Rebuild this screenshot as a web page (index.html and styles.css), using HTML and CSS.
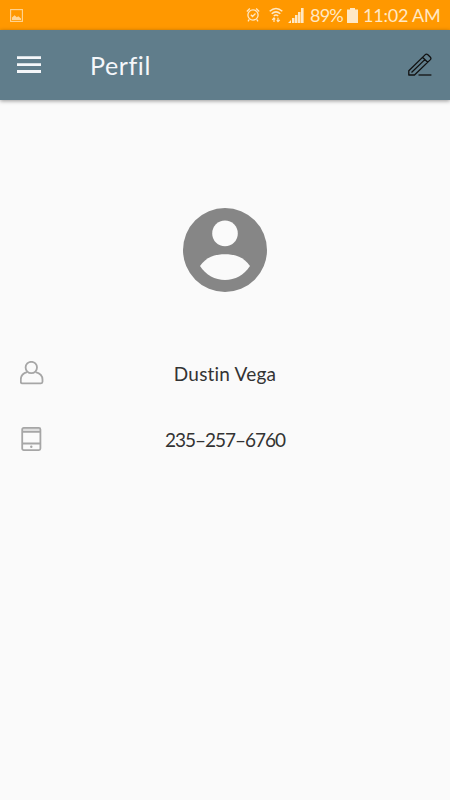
FILE: index.html
```html
<!DOCTYPE html>
<html lang="es">
<head>
    <meta charset="UTF-8">
    <meta name="viewport" content="width=device-width, initial-scale=1">
    <title>Perfil</title>
    <link rel="stylesheet" href="styles.css">
</head>
<body>
    <div class="status-bar">
        <svg class="icon-picture" width="13" height="13" viewBox="0 0 13 13">
            <rect x=".6" y=".6" width="11.8" height="11.8" fill="none" stroke="currentColor" stroke-width="1.1"/>
            <path d="M2 11V8.4L4.6 6.2 6.8 8.2 8.3 7.2 11 9.4V11z" fill="currentColor"/>
        </svg>
        <div class="status-right">
            <svg class="icon-alarm" width="14" height="16" viewBox="0 0 14 16" fill="none" stroke="currentColor" stroke-width="1.3">
                <circle cx="7" cy="8" r="5.1"/>
                <path d="M.8 4.4 3.8 1.6M13.2 4.4 10.2 1.6M3.3 12.4 2 14.3M10.7 12.4 12 14.3M4.8 7.8 6.5 9.5 9.5 6.5"/>
            </svg>
            <svg class="icon-wifi" width="14" height="16" viewBox="0 0 14 16" fill="none" stroke="currentColor" stroke-width="1.5">
                <path d="M.7 4.3Q7-1.3 13.3 4.3M2.7 6.7Q7 3 11.3 6.7M4.8 9Q7 7.2 9.2 9"/>
                <path d="M5 15V11M3.2 12.9 5 11 6.2 12.3M9 10.7V14.6M7.8 13.2 9 14.7 10.8 12.8" stroke-width="1.2"/>
            </svg>
            <svg class="icon-signal" width="16" height="15" viewBox="0 0 16 15" fill="currentColor">
                <path d="M0 15 3 12V15zM4 10H6.5V15H4zM7 7H9.5V15H7zM10 4H12.5V15H10zM13 0H15.6V15H13z"/>
            </svg>
            <span class="battery-level">89%</span>
            <svg class="icon-battery" width="11" height="15" viewBox="0 0 11 15" fill="currentColor">
                <path d="M3 0H8V1.4H11V15H0V1.4H3z"/>
            </svg>
            <span class="clock">11:02 AM</span>
        </div>
    </div>

    <header class="toolbar">
        <svg class="icon-menu" width="24" height="18" viewBox="0 0 24 18" fill="currentColor">
            <path d="M0 .3H24V3.1H0zM0 7.2H24V10H0zM0 14.1H24V16.9H0z"/>
        </svg>
        <h1>Perfil</h1>
        <svg class="icon-edit" width="26" height="24" viewBox="0 0 26 24" fill="none" stroke="#111" stroke-width="1.3" stroke-linejoin="round">
            <path d="M1.8 22V17.7L18.3 1.6Q19.6.6 20.9 1.8L23.2 4Q24.5 5.3 23.4 6.6L7.5 22zM15.5 4.3 20.7 9.3M4.5 19.5 18.1 6.4"/>
            <path d="M11.5 22H24.4"/>
        </svg>
    </header>

    <main>
        <svg class="avatar" width="84" height="84" viewBox="0 0 84 84">
            <circle cx="42" cy="42" r="42" fill="#868686"/>
            <circle cx="42" cy="25.4" r="12.8" fill="#fafafa"/>
            <path d="M17 58C23 49 32 46.2 42 46.2S61 49 67 58C61 67 52 72 42 72S23 67 17 58z" fill="#fafafa"/>
        </svg>

        <div class="row">
            <svg class="icon-user" width="24" height="24" viewBox="0 0 24 24" fill="none" stroke="#a6a6a6" stroke-width="1.8">
                <circle cx="11.3" cy="6.5" r="5.7"/>
                <path d="M7 11.2C3 12.3.8 15.1.8 18.6V20.8Q.8 22.3 2.3 22.3H21Q22.5 22.3 22.5 20.8V18.6C22.5 15.1 19.8 12.3 15.6 11.2"/>
            </svg>
            <span class="name">Dustin Vega</span>
        </div>

        <div class="row">
            <svg class="icon-phone" width="24" height="24" viewBox="0 0 24 24" fill="none" stroke="#a6a6a6" stroke-width="1.8">
                <path d="M2.5 1.2H20V4.5H2.5z" fill="#dedede" stroke="none"/>
                <rect x="2.2" y=".9" width="18.2" height="22.2" rx="1.5"/>
                <path d="M2.2 4.8H20.4M2.2 16.5H20.4"/>
                <circle cx="11.3" cy="19.7" r="1.2" fill="#a6a6a6" stroke="none"/>
            </svg>
            <span class="phone">235–257–6760</span>
        </div>
    </main>
</body>
</html>
```
FILE: styles.css
```css
* {
    box-sizing: border-box;
}
body {
    margin: 0;
    min-height: 100vh;
    background-color: #fafafa;
    font-family: Lato, "Open Sans", sans-serif;
    font-variant-ligatures: none;
    color: #333;
}
svg {
    display: block;
    flex: none;
}
.status-bar {
    display: flex;
    align-items: center;
    justify-content: space-between;
    height: 30px;
    padding: 0 10px;
    background-color: #ff9800;
    color: #ffe8c4;
}
.status-right {
    display: flex;
    align-items: center;
    font-size: 18px;
    line-height: 30px;
    white-space: nowrap;
}
.icon-picture {
    color: #ffd596;
}
.icon-wifi {
    margin-left: 9px;
}
.icon-signal {
    margin-left: 5px;
}
.battery-level {
    width: 33px;
    margin-left: 6px;
    letter-spacing: -0.8px;
}
.icon-battery {
    margin-left: 4px;
}
.clock {
    width: 77px;
    margin-left: 5px;
    letter-spacing: -0.2px;
}
.toolbar {
    display: flex;
    align-items: center;
    height: 70px;
    padding: 0 17px;
    background-color: #607d8b;
    color: #f5f7fa;
    box-shadow: 0 1px 4px rgba(0,0,0,0.4);
}
.toolbar h1 {
    margin: 0 auto 0 49px;
    font-size: 25px;
    font-weight: 400;
    line-height: 30px;
    letter-spacing: 0.6px;
}
main {
    padding-top: 108px;
}
.avatar {
    margin: 0 auto 48px;
}
.row {
    display: grid;
    grid-template-columns: 24px 1fr 24px;
    align-items: center;
    height: 66px;
    padding: 0 20px;
    text-align: center;
    font-size: 19px;
}
.name {
    padding-top: 1px;
    letter-spacing: 0.2px;
}
.phone {
    padding-top: 1px;
    letter-spacing: -1px;
}
```
